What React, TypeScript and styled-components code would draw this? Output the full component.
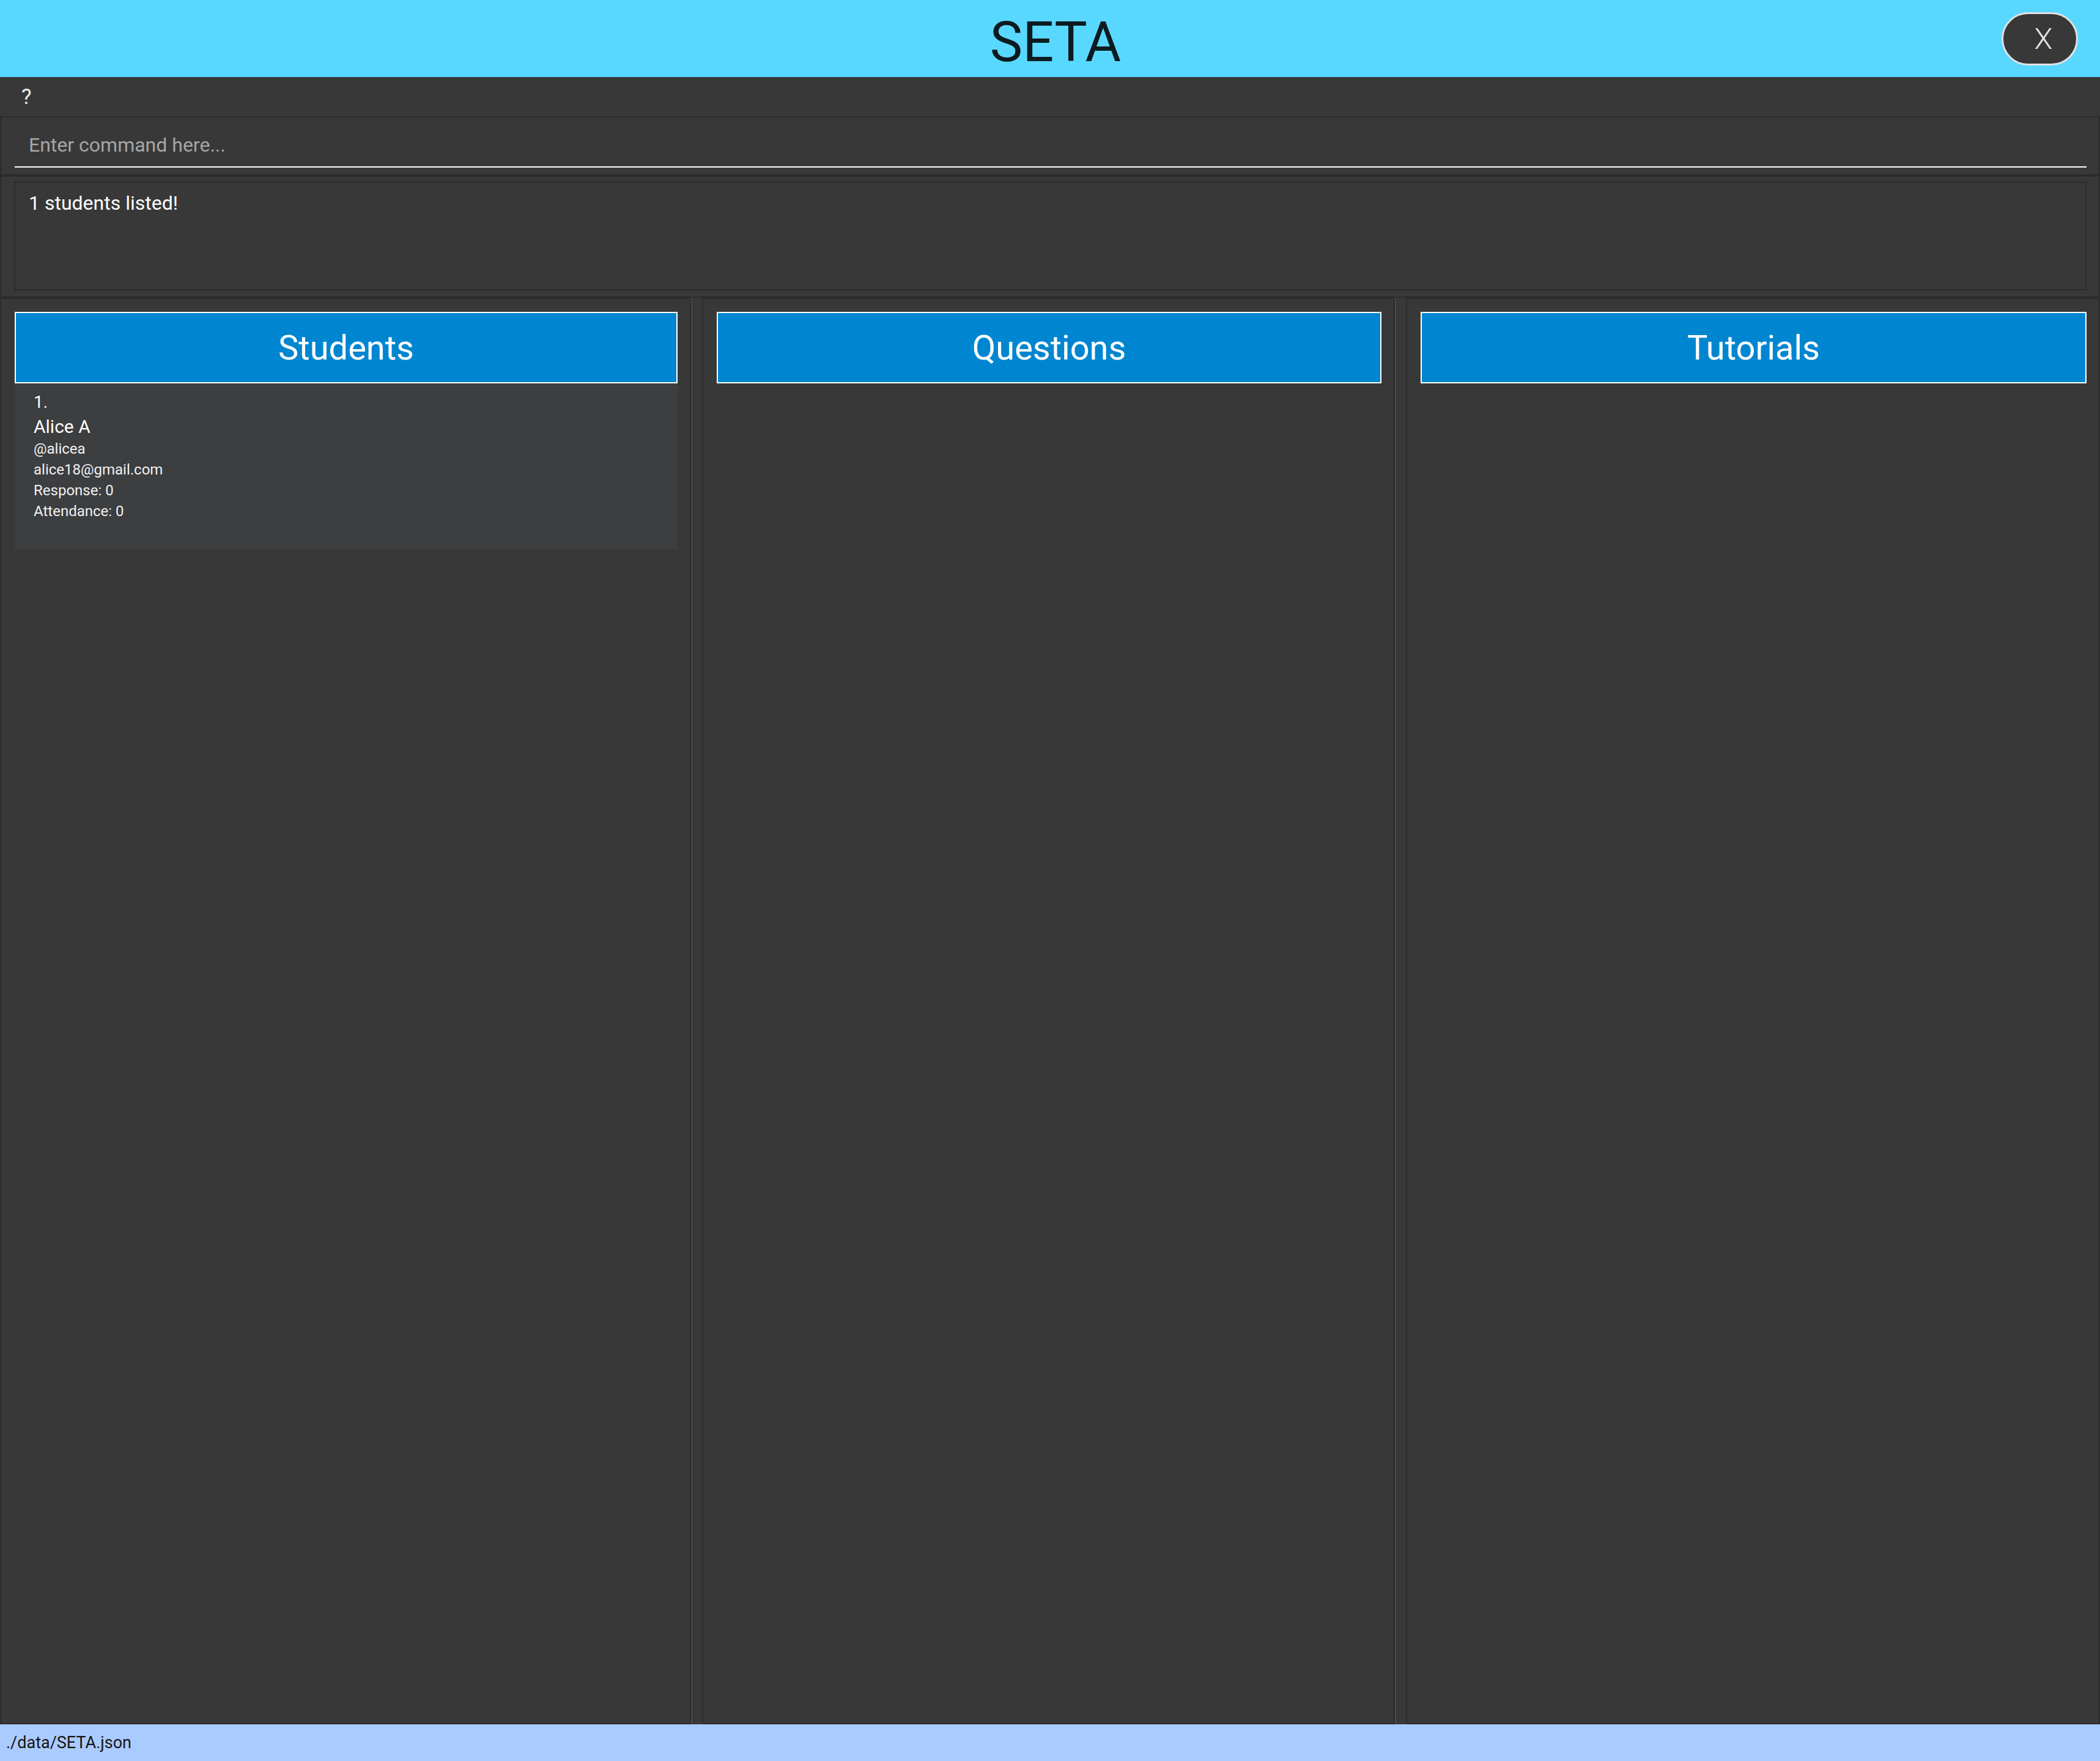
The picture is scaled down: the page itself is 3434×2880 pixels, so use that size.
import React from "react";
import styled, { createGlobalStyle } from "styled-components";

const GlobalStyle = createGlobalStyle`
  html, body {
    margin: 0;
    padding: 0;
    background: #383838;
  }
  * { box-sizing: border-box; }
  body {
    font-family: Roboto, "Liberation Sans", sans-serif;
  }
`;

const Window = styled.div`
  width: 3434px;
  height: 2880px;
  display: flex;
  flex-direction: column;
  background: #383838;
  overflow: hidden;
`;

const TopBar = styled.header`
  height: 126px;
  flex: none;
  background: #59d8ff;
  display: grid;
  grid-template-columns: 1fr auto 1fr;
  align-items: center;
`;

const Title = styled.h1`
  grid-column: 2;
  margin: 0;
  padding: 14px 0 0 18px;
  font-size: 90px;
  font-weight: 400;
  color: #0c1b1f;
  line-height: 1;
`;

const CloseButton = styled.button`
  grid-column: 3;
  justify-self: end;
  margin-right: 36px;
  width: 125px;
  height: 87px;
  padding: 0 0 0 12px;
  border: 3px solid #e2e2e2;
  border-radius: 44px;
  background: #383838;
  color: #e2e2e2;
  font-family: Roboto, sans-serif;
  font-size: 49px;
  font-weight: 300;
  line-height: 1;
  display: flex;
  align-items: center;
  justify-content: center;
`;

const MenuBar = styled.nav`
  height: 64px;
  flex: none;
  display: flex;
  align-items: center;
  padding-left: 35px;
`;

const MenuItem = styled.span`
  font-size: 35px;
  color: #ececec;
`;

const CommandBox = styled.div`
  height: 97px;
  flex: none;
  border: 2px solid #2b2b2b;
  padding: 0 20px 11px 22px;
  display: flex;
  align-items: flex-end;
`;

const CommandInput = styled.input`
  width: 100%;
  height: 82px;
  padding: 10px 23px 0 23px;
  border: none;
  border-bottom: 2px solid #ffffff;
  background: transparent;
  color: #ffffff;
  font-family: Roboto, sans-serif;
  font-size: 32px;
  outline: none;
  &::placeholder {
    color: #a6a6a6;
  }
`;

const ResultBox = styled.div`
  height: 200px;
  flex: none;
  border: 2px solid #2b2b2b;
  padding: 8px 20px 10px 21px;
  display: flex;
`;

const ResultInner = styled.div`
  flex: 1;
  border: 2px solid #2b2b2b;
  padding: 13px 22px;
  color: #ffffff;
  font-size: 32px;
  line-height: 40px;
`;

const PanelRow = styled.main`
  flex: 1;
  display: flex;
  min-height: 0;
`;

const Panel = styled.section<{ $weight: number }>`
  flex: ${(p) => p.$weight} 1 0;
  min-width: 0;
  border: 2px solid #2b2b2b;
  padding: 21px 20px 21px 22px;
  display: flex;
  flex-direction: column;
`;

const Divider = styled.div`
  width: 18px;
  flex: none;
  border-left: 2px solid #4a4a4a;
`;

const PanelHeader = styled.div`
  height: 117px;
  flex: none;
  background: #0086d1;
  border: 2px solid #ffffff;
  color: #ffffff;
  font-size: 56px;
  display: flex;
  align-items: center;
  justify-content: center;
`;

const Card = styled.div`
  background: #3c3e40;
  padding: 10px 31px 45px;
  display: flex;
  flex-direction: column;
  color: #ffffff;
`;

const CardIndex = styled.div`
  font-size: 28px;
  line-height: 41px;
`;

const CardName = styled.div`
  font-size: 30px;
  line-height: 39px;
`;

const CardDetail = styled.div`
  font-size: 24px;
  line-height: 34px;
  color: #f0f0f0;
`;

const StatusBar = styled.footer`
  height: 60px;
  flex: none;
  background: #aacbff;
  padding-left: 10px;
  display: flex;
  align-items: center;
  font-size: 27px;
  color: #151515;
`;

type Student = {
  name: string;
  handle: string;
  email: string;
  response: number;
  attendance: number;
};

const students: Student[] = [
  { name: "Alice A", handle: "@alicea", email: "alice18@gmail.com", response: 0, attendance: 0 },
];

export default function App() {
  return (
    <>
      <GlobalStyle />
      <Window>
        <TopBar>
          <Title>SETA</Title>
          <CloseButton>X</CloseButton>
        </TopBar>
        <MenuBar>
          <MenuItem>?</MenuItem>
        </MenuBar>
        <CommandBox>
          <CommandInput placeholder="Enter command here..." />
        </CommandBox>
        <ResultBox>
          <ResultInner>1 students listed!</ResultInner>
        </ResultBox>
        <PanelRow>
          <Panel $weight={1130}>
            <PanelHeader>Students</PanelHeader>
            {students.map((s, i) => (
              <Card key={s.handle}>
                <CardIndex>{i + 1}.</CardIndex>
                <CardName>{s.name}</CardName>
                <CardDetail>{s.handle}</CardDetail>
                <CardDetail>{s.email}</CardDetail>
                <CardDetail>Response: {s.response}</CardDetail>
                <CardDetail>Attendance: {s.attendance}</CardDetail>
              </Card>
            ))}
          </Panel>
          <Divider />
          <Panel $weight={1133}>
            <PanelHeader>Questions</PanelHeader>
          </Panel>
          <Divider />
          <Panel $weight={1135}>
            <PanelHeader>Tutorials</PanelHeader>
          </Panel>
        </PanelRow>
        <StatusBar>./data/SETA.json</StatusBar>
      </Window>
    </>
  );
}
